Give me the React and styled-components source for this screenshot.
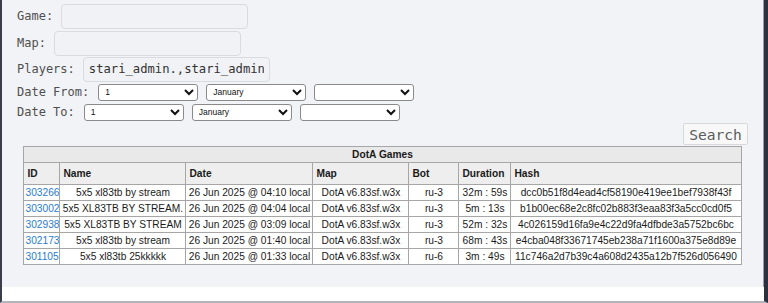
import React from "react";
import styled, { createGlobalStyle } from "styled-components";

const GlobalStyle = createGlobalStyle`
    html, body {
        margin: 0;
        padding: 0;
        background: #ffffff;
    }
`;

const Frame = styled.div`
    box-sizing: border-box;
    width: 768px;
    height: 303px;
    display: flex;
    flex-direction: column;
    background: #ffffff;
    border-left: 2px solid #3b3d4a;
    border-right: 4px solid #2e3040;
    border-bottom: 2px solid #b3b5bc;
    overflow: hidden;
`;

const Main = styled.div`
    box-sizing: border-box;
    height: 287px;
    background: #f1f3f7;
    border-right: 1px solid #9a9ca5;
    padding: 3px 15px 0 15px;
    display: flex;
    flex-direction: column;
`;

const Row = styled.div`
    display: flex;
    align-items: center;
    gap: ${(p) => p.$gap || 8}px;
    height: ${(p) => p.$height || 26}px;
    margin-bottom: ${(p) => p.$after || 0}px;
`;

const Label = styled.span`
    font-family: "DejaVu Sans Mono", "Liberation Mono", monospace;
    font-size: 12px;
    color: #4f4f4f;
    white-space: pre;
    margin-right: ${(p) => p.$space || 0}px;
`;

const TextInput = styled.input`
    box-sizing: border-box;
    width: 187px;
    height: 25px;
    padding: 0 5px;
    border: 1px solid #d9dbe0;
    border-radius: 4px;
    background: #f0f2f6;
    font-family: "DejaVu Sans Mono", "Liberation Mono", monospace;
    font-size: 12.2px;
    color: #333333;
    outline: none;
`;

const Picker = styled.select`
    box-sizing: border-box;
    width: 100px;
    height: 17px;
    padding: 0 2px;
    font-family: "Liberation Sans", Arial, sans-serif;
    font-size: 8.5px;
    color: #111;
    background: #ffffff;
    border: 1px solid #8a8a8a;
    border-radius: 3px;
`;

const ButtonBar = styled.div`
    display: flex;
    justify-content: flex-end;
    margin-top: 1px;
`;

const SearchButton = styled.button`
    box-sizing: border-box;
    width: 65px;
    height: 22px;
    padding: 0;
    background: #f8f8f9;
    border: 1px solid #d8d9dd;
    border-radius: 2px;
    font-family: "DejaVu Sans Mono", "Liberation Mono", monospace;
    font-size: 14.6px;
    color: #5c5c5c;
`;

const GamesTable = styled.table`
    width: 717px;
    margin: 1px auto 0 auto;
    table-layout: fixed;
    border-collapse: collapse;
    border: 1px solid #999999;
    font-family: "Liberation Sans", Arial, sans-serif;
    font-size: 10.2px;
    color: #1a1a1a;
    background: #ffffff;
`;

const Caption = styled.th`
    background: #e9e9e9;
    border: 1px solid #a6a6a6;
    padding: 1px 3px;
    line-height: 13px;
    font-weight: bold;
    text-align: center;
`;

const HeadCell = styled.th`
    background: #eeeeee;
    border: 1px solid #a6a6a6;
    padding: 4px 3px;
    line-height: 13px;
    font-weight: bold;
    text-align: left;
`;

const Cell = styled.td`
    border: 1px solid #a6a6a6;
    padding: 1px 1px;
    line-height: 13px;
    white-space: nowrap;
    overflow: hidden;
    text-align: ${(p) => p.$align || "center"};
`;

const GameLink = styled.a`
    color: #2a7ad3;
    text-decoration: none;
`;

const columns = [
    { title: "ID", width: 36 },
    { title: "Name", width: 126 },
    { title: "Date", width: 127 },
    { title: "Map", width: 96 },
    { title: "Bot", width: 50 },
    { title: "Duration", width: 52 },
    { title: "Hash", width: 230 },
];

const games = [
    { id: "303266", name: "5x5 xl83tb by stream", date: "26 Jun 2025 @ 04:10 local", bot: "ru-3", duration: "32m : 59s", hash: "dcc0b51f8d4ead4cf58190e419ee1bef7938f43f" },
    { id: "303002", name: "5x5 XL83TB BY STREAM.", date: "26 Jun 2025 @ 04:04 local", bot: "ru-3", duration: "5m : 13s", hash: "b1b00ec68e2c8fc02b883f3eaa83f3a5cc0cd0f5" },
    { id: "302938", name: "5x5 XL83TB BY STREAM", date: "26 Jun 2025 @ 03:09 local", bot: "ru-3", duration: "52m : 32s", hash: "4c026159d16fa9e4c22d9fa4dfbde3a5752bc6bc" },
    { id: "302173", name: "5x5 xl83tb by stream", date: "26 Jun 2025 @ 01:40 local", bot: "ru-3", duration: "68m : 43s", hash: "e4cba048f33671745eb238a71f1600a375e8d89e" },
    { id: "301105", name: "5x5 xl83tb 25kkkkk", date: "26 Jun 2025 @ 01:33 local", bot: "ru-6", duration: "3m : 49s", hash: "11c746a2d7b39c4a608d2435a12b7f526d056490" },
];

function DatePickers() {
    return (
        <>
            <Picker defaultValue="1">
                <option value="1">1</option>
            </Picker>
            <Picker defaultValue="January">
                <option value="January">January</option>
            </Picker>
            <Picker defaultValue="">
                <option value=""></option>
            </Picker>
        </>
    );
}

function App() {
    return (
        <Frame>
            <GlobalStyle />
            <Main>
                <Row $height={26} $after={1}>
                    <Label>Game:</Label>
                    <TextInput type="text" />
                </Row>
                <Row $height={26}>
                    <Label>Map:</Label>
                    <TextInput type="text" />
                </Row>
                <Row $height={26}>
                    <Label>Players:</Label>
                    <TextInput type="text" defaultValue="stari_admin.,stari_admin" />
                </Row>
                <Row $height={20} $gap={8}>
                    <Label $space={1}>Date From:</Label>
                    <DatePickers />
                </Row>
                <Row $height={20} $gap={8}>
                    <Label $space={1}>Date To:</Label>
                    <DatePickers />
                </Row>
                <ButtonBar>
                    <SearchButton>Search</SearchButton>
                </ButtonBar>
                <GamesTable>
                    <colgroup>
                        {columns.map((c) => (
                            <col key={c.title} style={{ width: c.width }} />
                        ))}
                    </colgroup>
                    <thead>
                        <tr>
                            <Caption colSpan={7}>DotA Games</Caption>
                        </tr>
                        <tr>
                            {columns.map((c) => (
                                <HeadCell key={c.title}>{c.title}</HeadCell>
                            ))}
                        </tr>
                    </thead>
                    <tbody>
                        {games.map((g) => (
                            <tr key={g.id}>
                                <Cell $align="left">
                                    <GameLink href="#">{g.id}</GameLink>
                                </Cell>
                                <Cell>{g.name}</Cell>
                                <Cell>{g.date}</Cell>
                                <Cell>DotA v6.83sf.w3x</Cell>
                                <Cell>{g.bot}</Cell>
                                <Cell>{g.duration}</Cell>
                                <Cell>{g.hash}</Cell>
                            </tr>
                        ))}
                    </tbody>
                </GamesTable>
            </Main>
        </Frame>
    );
}

export default App;
